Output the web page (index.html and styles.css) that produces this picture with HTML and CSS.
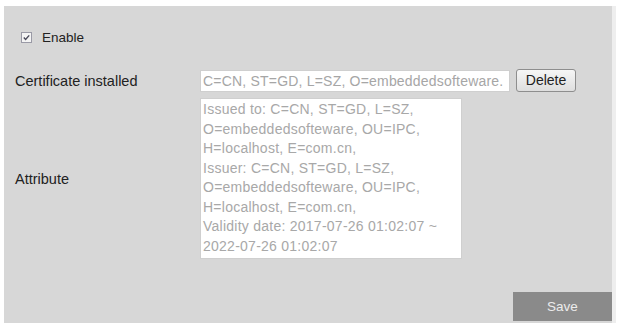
FILE: index.html
```html
<!DOCTYPE html>
<html>
<head>
<meta charset="utf-8">
<link rel="stylesheet" href="styles.css">
</head>
<body>
<div class="panel">
  <div class="enable-row">
    <span class="check">
      <svg width="11" height="11" viewBox="0 0 11 11"><rect x="0.5" y="0.5" width="10" height="10" fill="#f4f4f4" stroke="#9a9aa6"/><path d="M2.8 5.6 L4.6 7.4 L8.2 3.4" fill="none" stroke="#4a4a5a" stroke-width="1.4"/></svg>
    </span>
    <span class="enable-label">Enable</span>
  </div>
  <div class="row cert-row">
    <div class="label">Certificate installed</div>
    <div class="field-line">
      <div class="input">C=CN, ST=GD, L=SZ, O=embeddedsofteware.</div>
      <div class="btn">Delete</div>
    </div>
  </div>
  <div class="row attr-row">
    <div class="label">Attribute</div>
    <div class="textarea">Issued to: C=CN, ST=GD, L=SZ,<br>O=embeddedsofteware, OU=IPC,<br>H=localhost, E=com.cn,<br>Issuer: C=CN, ST=GD, L=SZ,<br>O=embeddedsofteware, OU=IPC,<br>H=localhost, E=com.cn,<br>Validity date: 2017-07-26 01:02:07 ~<br>2022-07-26 01:02:07</div>
  </div>
  <div class="save">Save</div>
</div>
</body>
</html>
```
FILE: styles.css
```css
html, body {
  margin: 0;
  padding: 0;
  background: #ffffff;
}
body {
  font-family: "Liberation Sans", Arial, sans-serif;
  font-size: 13.5px;
  color: #222;
}
.panel {
  margin: 6px 6px 0 4px;
  height: 317px;
  box-sizing: border-box;
  background: #d7d7d7;
  padding: 0 0 0 11px;
  display: flex;
  flex-direction: column;
  box-shadow: 4px 0 0 #eeeeee;
}
.enable-row {
  display: flex;
  align-items: center;
  height: 14px;
  margin-top: 24px;
}
.check {
  display: inline-flex;
  margin-left: 6px;
  width: 11px;
  height: 11px;
}
.enable-label {
  margin-left: 10px;
  color: #222;
  font-size: 13.5px;
}
.row {
  display: grid;
  grid-template-columns: 185px auto;
  align-items: center;
}
.cert-row {
  margin-top: 25px;
}
.label {
  color: #222;
  font-size: 14.5px;
}
.field-line {
  display: flex;
  align-items: center;
  gap: 6px;
}
.input {
  width: 306px;
  height: 20px;
  line-height: 20px;
  background: #fff;
  border: 1px solid #cfcfcf;
  padding-left: 2px;
  color: #a6a6a6;
  font-size: 14px;
  letter-spacing: 0.2px;
  white-space: nowrap;
  overflow: hidden;
}
.btn {
  width: 58px;
  height: 21px;
  line-height: 21px;
  text-align: center;
  border: 1px solid #8e8e8e;
  border-radius: 3px;
  background: linear-gradient(#f6f6f6, #dedede);
  color: #222;
  font-size: 14px;
}
.attr-row {
  margin-top: 6px;
}
.textarea {
  width: 262px;
  height: 161px;
  box-sizing: border-box;
  background: #fff;
  border: 1px solid #cfcfcf;
  padding: 1px 0 0 2px;
  color: #a8a8a8;
  font-size: 14px;
  letter-spacing: 0.25px;
  line-height: 19.5px;
  white-space: nowrap;
  overflow: hidden;
}
.save {
  align-self: flex-end;
  margin-top: auto;
  margin-bottom: 2px;
  width: 99px;
  height: 29px;
  line-height: 29px;
  text-align: center;
  background: #8a8a8a;
  color: #ececec;
  font-size: 13.5px;
}
```
